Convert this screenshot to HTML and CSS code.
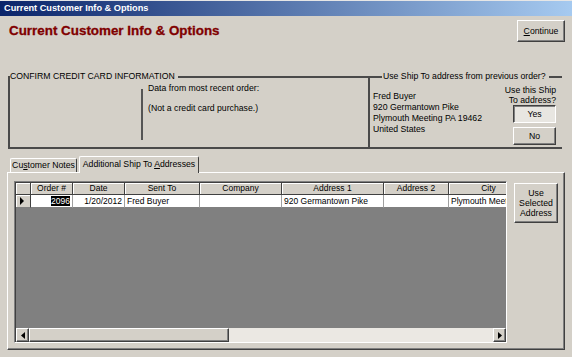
FILE: index.html
```html
<!DOCTYPE html>
<html lang="en">
<head>
  <meta charset="UTF-8">
  <title>Current Customer Info &amp; Options</title>
  <link rel="stylesheet" href="styles.css">
</head>
<body>

  <!-- Barra de titulo de la ventana -->
  <div class="titlebar">Current Customer Info &amp; Options</div>

  <div class="top">
    <h1 class="heading">Current Customer Info &amp; Options</h1>
    <button class="btn btn-continue"><u>C</u>ontinue</button>
  </div>

  <!-- Marcos de tarjeta y direccion de envio -->
  <div class="frames">
    <fieldset class="frame frame-card">
      <legend>CONFIRM CREDIT CARD INFORMATION</legend>
      <div class="card-body">
        <div class="card-blank"></div>
        <div class="divider"></div>
        <div class="card-text">
          <p>Data from most recent order:</p>
          <p class="card-note">(Not a credit card purchase.)</p>
        </div>
      </div>
    </fieldset>

    <fieldset class="frame frame-ship">
      <legend>Use Ship To address from previous order?</legend>
      <div class="ship-body">
        <div class="address">
          Fred Buyer<br>
          920 Germantown Pike<br>
          Plymouth Meeting PA 19462<br>
          United States
        </div>
        <div class="ship-choice">
          <div class="ship-q">Use this Ship<br>To address?</div>
          <button class="btn btn-small btn-pressed">Yes</button>
          <button class="btn btn-small btn-no">No</button>
        </div>
      </div>
    </fieldset>
  </div>

  <!-- Pestañas -->
  <div class="tabs">
    <div class="tab">Cu<u>s</u>tomer Notes</div>
    <div class="tab tab-active">Additional Ship To <u>A</u>ddresses</div>
  </div>

  <div class="panel">
    <div class="grid">
      <div class="grid-body">
        <table class="sheet">
          <colgroup>
            <col style="width:15px">
            <col style="width:42px">
            <col style="width:52px">
            <col style="width:75px">
            <col style="width:82px">
            <col style="width:102px">
            <col style="width:65px">
            <col style="width:80px">
          </colgroup>
          <thead>
            <tr>
              <th></th>
              <th>Order #</th>
              <th>Date</th>
              <th>Sent To</th>
              <th>Company</th>
              <th>Address 1</th>
              <th>Address 2</th>
              <th>City</th>
            </tr>
          </thead>
          <tbody>
            <tr>
              <td class="selector">
                <svg width="6" height="8" viewBox="0 0 6 8"><path d="M1 0 L5 4 L1 8 Z" fill="#000"/></svg>
              </td>
              <td class="num"><span class="sel">2096</span></td>
              <td class="num">1/20/2012</td>
              <td>Fred Buyer</td>
              <td></td>
              <td>920 Germantown Pike</td>
              <td></td>
              <td>Plymouth Meeting</td>
            </tr>
          </tbody>
        </table>
      </div>

      <!-- Barra de desplazamiento horizontal -->
      <div class="hscroll">
        <div class="sb-btn">
          <svg width="4" height="7" viewBox="0 0 4 7"><path d="M4 0 L0 3.5 L4 7 Z" fill="#000"/></svg>
        </div>
        <div class="sb-thumb"></div>
        <div class="sb-track"></div>
        <div class="sb-btn">
          <svg width="4" height="7" viewBox="0 0 4 7"><path d="M0 0 L4 3.5 L0 7 Z" fill="#000"/></svg>
        </div>
      </div>
    </div>

    <button class="btn btn-use">Use<br>Selected<br>Address</button>
  </div>

</body>
</html>
```

FILE: styles.css
```css
body {
  margin: 0;
  width: 572px;
  height: 357px;
  overflow: hidden;
  background-color: #d4d0c8;
  color: #000;
  font-family: 'Liberation Sans', Arial, sans-serif;
  font-size: 8.7px;
}

p {
  margin: 0;
}

.titlebar {
  height: 15px;
  border-top: 1px solid #e6e6e6;
  padding-left: 4px;
  line-height: 15px;
  font-size: 9.2px;
  font-weight: bold;
  color: #fff;
  background: linear-gradient(to right, #0a246a, #a6caf0);
}

.top {
  height: 55px;
  box-sizing: border-box;
  padding: 4px 7px 0 9px;
  display: flex;
  justify-content: space-between;
  align-items: flex-start;
}

.heading {
  margin: 3px 0 0 0;
  font-size: 13.4px;
  line-height: 16px;
  color: #800000;
  -webkit-text-stroke: 0.3px #800000;
}

/* Botones estilo clasico */
.btn {
  font-family: inherit;
  font-size: 8.7px;
  color: #000;
  background-color: #d4d0c8;
  border: 1px solid;
  border-color: #fff #404040 #404040 #fff;
  box-shadow: inset -1px -1px 0 #808080;
  padding: 0;
  cursor: pointer;
}

.btn-continue {
  width: 48px;
  height: 22px;
}

.btn-small {
  display: block;
  width: 43px;
  height: 18px;
  margin-left: auto;
}

.btn-pressed {
  background-color: #e8e6e1;
  border-color: #404040 #fff #fff #404040;
  box-shadow: inset 1px 1px 0 #808080;
}

.btn-no {
  margin-top: 4px;
}

.btn-use {
  width: 44px;
  height: 40px;
  margin-top: 2px;
  line-height: 10px;
}

/* Marcos */
.frames {
  display: flex;
  padding-left: 8px;
}

.frame {
  margin: 0;
  padding: 0;
  min-width: 0;
  height: 78px;
  box-sizing: border-box;
  border: 2px solid #4a4a4a;
  border-right: none;
}

.frame legend {
  padding: 0 3px 0 0;
  line-height: 11px;
}

.frame-card {
  width: 360px;
}

.frame-ship {
  width: 194px;
}

.frame-ship legend {
  margin-left: 12px;
  padding: 0 3px 0 1px;
}

.card-body {
  display: flex;
}

.card-blank {
  width: 131px;
}

.divider {
  width: 2px;
  height: 51px;
  margin-top: 7px;
  background-color: #555;
}

.card-text {
  padding-left: 5px;
  padding-top: 1px;
  line-height: 11px;
}

.card-note {
  margin-top: 9px;
}

.ship-body {
  display: flex;
  justify-content: space-between;
  padding: 0 6px 0 3px;
}

.address {
  margin-top: 9px;
  line-height: 11px;
}

.ship-choice {
  margin-top: 3px;
  text-align: right;
}

.ship-q {
  line-height: 10px;
}

/* Pestañas */
.tabs {
  display: flex;
  align-items: flex-end;
  margin-top: 6px;
  padding-left: 10px;
  height: 17px;
  position: relative;
  z-index: 1;
}

.tab {
  box-sizing: border-box;
  width: 67px;
  height: 14px;
  line-height: 13px;
  white-space: nowrap;
  text-align: center;
  border: 1px solid;
  border-color: #fff #404040 transparent #fff;
  border-bottom: none;
  border-radius: 2px 2px 0 0;
}

.tab-active {
  width: 120px;
  height: 17px;
  line-height: 15px;
  margin-left: 2px;
  margin-bottom: -1px;
  background-color: #d4d0c8;
}

.panel {
  margin: 0 7px;
  height: 178px;
  box-sizing: border-box;
  border: 1px solid;
  border-color: #fff #404040 #404040 #fff;
  box-shadow: inset -1px -1px 0 #808080;
  padding: 8px 0 0 6px;
  display: flex;
  gap: 7px;
  align-items: flex-start;
}

/* Hoja de datos */
.grid {
  width: 493px;
  height: 162px;
  box-sizing: border-box;
  border: 1px solid;
  border-color: #808080 #fff #fff #808080;
  background-color: #808080;
  display: flex;
  flex-direction: column;
}

.grid-body {
  flex: 1;
  overflow: hidden;
  border-top: 1px solid #404040;
  border-left: 1px solid #404040;
}

.sheet {
  table-layout: fixed;
  width: 513px;
  border-collapse: separate;
  border-spacing: 0;
  font-size: 8.5px;
}

.sheet th {
  height: 11px;
  padding: 0;
  font-weight: normal;
  text-align: center;
  background-color: #d4d0c8;
  border-right: 1px solid #404040;
  border-bottom: 1px solid #404040;
  box-shadow: inset 1px 1px 0 #fff;
  line-height: 11px;
}

.sheet td {
  height: 12px;
  padding: 0 2px;
  background-color: #fff;
  border-right: 1px solid #a0a0a0;
  border-bottom: 1px solid #808080;
  white-space: nowrap;
  overflow: hidden;
  line-height: 12px;
}

.sheet td.selector {
  padding: 0 0 0 3px;
  background-color: #d4d0c8;
  border-right: 1px solid #404040;
  box-shadow: inset 1px 1px 0 #fff;
}

.sheet td.selector svg {
  display: block;
}

.sheet td.num {
  text-align: right;
}

.sel {
  background-color: #000;
  color: #fff;
}

.hscroll {
  height: 14px;
  display: flex;
  background-color: #ebe8e3;
  border-left: 1px solid #404040;
}

.sb-btn,
.sb-thumb {
  box-sizing: border-box;
  background-color: #d4d0c8;
  border: 1px solid;
  border-color: #fff #404040 #404040 #fff;
  box-shadow: inset -1px -1px 0 #808080;
}

.sb-btn {
  width: 13px;
  display: flex;
  align-items: center;
  justify-content: center;
}

.sb-thumb {
  width: 200px;
}

.sb-track {
  flex: 1;
}
```
